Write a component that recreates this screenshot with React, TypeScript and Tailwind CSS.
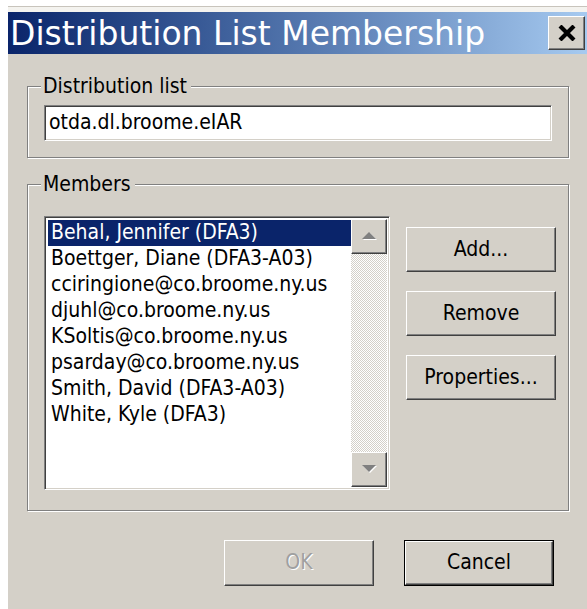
import type { ReactNode } from "react";

const members = [
  "Behal, Jennifer (DFA3)",
  "Boettger, Diane (DFA3-A03)",
  "cciringione@co.broome.ny.us",
  "djuhl@co.broome.ny.us",
  "KSoltis@co.broome.ny.us",
  "psarday@co.broome.ny.us",
  "Smith, David (DFA3-A03)",
  "White, Kyle (DFA3)",
];

// classic 3D bevels
const raised =
  "bg-[#d4d0c8] border border-t-white border-l-white border-r-[#404040] border-b-[#404040] shadow-[inset_-1px_-1px_0_#808080]";
const sunken =
  "bg-white border border-t-[#808080] border-l-[#808080] border-r-white border-b-white shadow-[inset_1px_1px_0_#404040,inset_-1px_-1px_0_#d4d0c8]";

function GroupBox({ label, className, children }: { label: string; className?: string; children: ReactNode }) {
  return (
    <fieldset
      className={
        "border border-[#808080] shadow-[1px_1px_0_#fff,inset_1px_1px_0_#fff] " + (className ?? "")
      }
    >
      <legend className="-ml-[3px] pl-[2px] pr-[4px] leading-[22px] bg-[#d4d0c8]">{label}</legend>
      {children}
    </fieldset>
  );
}

function Button({ children, disabled, isDefault, className }: { children: ReactNode; disabled?: boolean; isDefault?: boolean; className?: string }) {
  const face = (
    <div
      className={
        raised +
        " flex h-full w-full items-center justify-center " +
        (disabled ? "text-[#a0a0a0] [text-shadow:1px_1px_0_#fff]" : "text-black")
      }
    >
      {children}
    </div>
  );
  if (isDefault) {
    return <div className={"border border-black " + (className ?? "")}>{face}</div>;
  }
  return <div className={className}>{face}</div>;
}

function Arrow({ up }: { up?: boolean }) {
  return (
    <svg width="16" height="9" viewBox="0 0 16 9">
      {up ? (
        <>
          <polygon points="2,8 16,8 9,1" fill="#fff" />
          <polygon points="1,7 15,7 8,0" fill="#808080" />
        </>
      ) : (
        <>
          <polygon points="2,1 16,1 9,8" fill="#fff" />
          <polygon points="1,0 15,0 8,7" fill="#808080" />
        </>
      )}
    </svg>
  );
}

function ScrollBar() {
  return (
    <div className="flex w-[36px] flex-col">
      <div className={raised + " flex h-[35px] items-center justify-center"}>
        <Arrow up />
      </div>
      <div className="flex-1 bg-[repeating-conic-gradient(#d4d0c8_0_25%,#fff_0_50%)] bg-[length:2px_2px]" />
      <div className={raised + " flex h-[35px] items-center justify-center"}>
        <Arrow />
      </div>
    </div>
  );
}

export default function App() {
  return (
    <div className="flex h-[609px] w-[587px] bg-white font-['DejaVu_Sans_Condensed','DejaVu_Sans',sans-serif] text-[21px] text-black">
      <div className="w-[8px]" />
      <div className="flex flex-1 flex-col">
        {/* window top edge */}
        <div className="h-[6px] bg-white" />
        <div className="h-[6px] border-t border-[#c8c4bc] bg-[#f4f3ef]" />

        {/* title bar */}
        <div className="flex h-[42px] items-center justify-between bg-gradient-to-r from-[#0a246a] to-[#a6caf0] pl-[2px] pr-[2px]">
          <span className="text-[33px] leading-none text-white font-['DejaVu_Sans',sans-serif]">
            Distribution List Membership
          </span>
          <div className={raised + " flex h-[34px] w-[37px] items-center justify-center"}>
            <svg width="18" height="16" viewBox="0 0 18 16">
              <path d="M2 1 L16 15 M16 1 L2 15" stroke="#000" strokeWidth="4.2" />
            </svg>
          </div>
        </div>

        {/* dialog body */}
        <div className="flex flex-1 flex-col bg-[#d4d0c8] pt-[21px]">
          <GroupBox label="Distribution list" className="ml-[19px] mr-[18px] px-[16px] pt-[8px] pb-[16px]">
            <div className={sunken + " flex h-[36px] items-center pl-[4px]"}>otda.dl.broome.eIAR</div>
          </GroupBox>

          <GroupBox label="Members" className="ml-[19px] mr-[18px] mt-[15px] pl-[16px] pr-[12px] pt-[21px] pb-[20px]">
            <div className="flex gap-[16px]">
              <div className={sunken + " flex h-[274px] w-[346px] p-[2px]"}>
                <div className="flex-1 pt-[1px] pl-[1px]">
                  {members.map((m, i) => (
                    <div
                      key={m}
                      className={
                        "flex h-[26px] items-center whitespace-nowrap pl-[3px] " +
                        (i === 0 ? "bg-[#0a246a] text-white" : "")
                      }
                    >
                      {m}
                    </div>
                  ))}
                </div>
                <ScrollBar />
              </div>

              <div className="mt-[11px] flex w-[150px] flex-col gap-[19px]">
                <Button className="h-[45px]">Add...</Button>
                <Button className="h-[45px]">Remove</Button>
                <Button className="h-[45px]">Properties...</Button>
              </div>
            </div>
          </GroupBox>

          <div className="mt-[29px] flex justify-end gap-[30px] pr-[33px]">
            <Button disabled className="h-[46px] w-[150px]">
              OK
            </Button>
            <Button isDefault className="h-[46px] w-[150px]">
              Cancel
            </Button>
          </div>
        </div>
      </div>
    </div>
  );
}
